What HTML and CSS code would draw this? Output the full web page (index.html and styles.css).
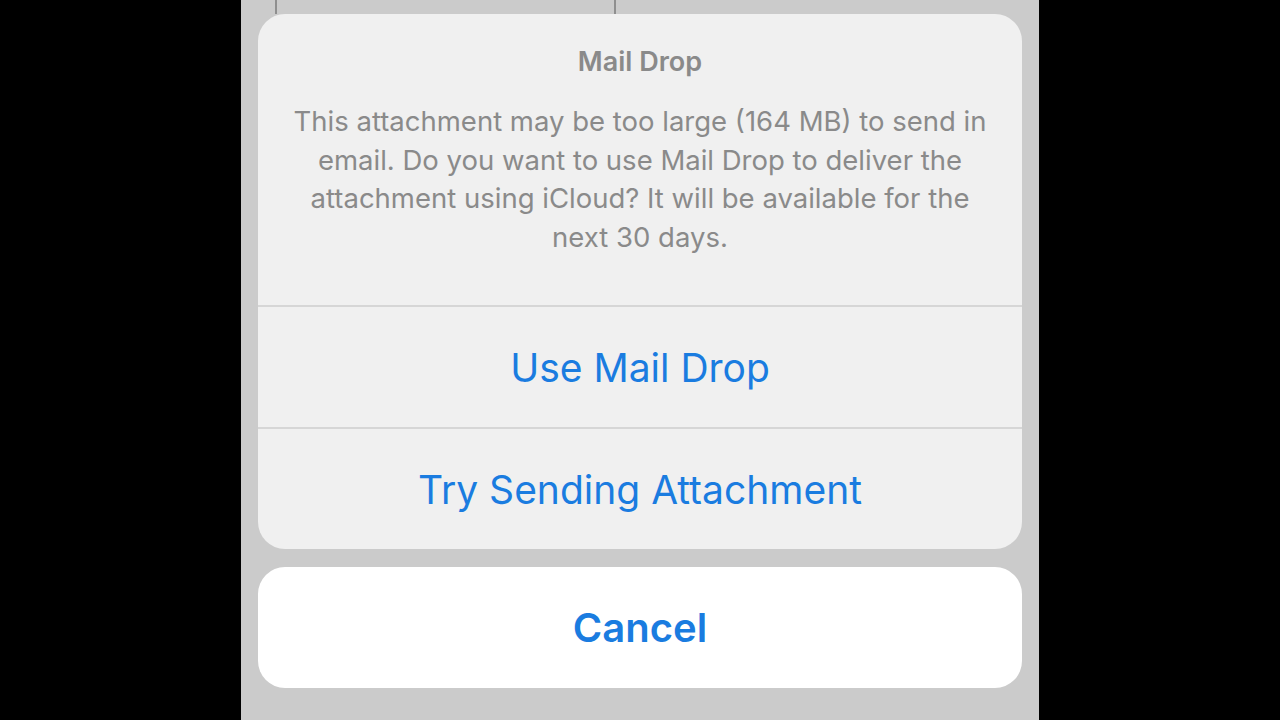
FILE: index.html
```html
<!DOCTYPE html>
<html>
<head>
<meta charset="utf-8">
<link rel="stylesheet" href="styles.css">
</head>
<body>
<div class="stage">
  <div class="phone">
    <div class="backdrop">
      <span class="bg-line bg-line-a"></span>
      <span class="bg-line bg-line-b"></span>
    </div>
    <div class="sheet">
      <div class="alert">
        <div class="header">
          <div class="title">Mail Drop</div>
          <div class="message">This attachment may be too large (164 MB) to send in email. Do you want to use Mail Drop to deliver the attachment using iCloud? It will be available for the next 30 days.</div>
        </div>
        <div class="action">Use Mail Drop</div>
        <div class="action">Try Sending Attachment</div>
      </div>
      <div class="cancel">Cancel</div>
    </div>
  </div>
</div>
</body>
</html>
```
FILE: styles.css
```css
html, body {
  margin: 0;
  padding: 0;
  background: #000;
  width: 1280px;
  height: 720px;
  overflow: hidden;
  font-family: Inter, "Noto Sans", sans-serif;
}
.stage {
  display: flex;
  justify-content: center;
  height: 720px;
}
.phone {
  width: 798px;
  background: #cbcbcb;
  height: 720px;
  position: relative;
}
.backdrop {
  position: absolute;
  left: 0;
  top: 0;
  right: 0;
  height: 14px;
}
.bg-line {
  position: absolute;
  top: 0;
  width: 2px;
  height: 14px;
  background: #8f8f8f;
}
.bg-line-a { left: 34px; }
.bg-line-b { left: 373px; }
.sheet {
  position: relative;
  padding: 14px 17px 0 17px;
  display: flex;
  flex-direction: column;
  gap: 18px;
}
.alert {
  background: #f0f0f0;
  border-radius: 27px;
  overflow: hidden;
}
.header {
  height: 293px;
  box-sizing: border-box;
  padding: 29px 34px 0 34px;
  text-align: center;
  border-bottom: 2px solid #d6d6d6;
}
.title {
  color: #8a8a8a;
  font-weight: 600;
  font-size: 27px;
  line-height: 38px;
}
.message {
  color: #8a8a8a;
  font-size: 27.5px;
  line-height: 38.5px;
  margin-top: 21px;
}
.action {
  height: 120px;
  display: flex;
  align-items: center;
  justify-content: center;
  color: #1a7ce0;
  font-size: 39px;
}
.action + .action {
  border-top: 2px solid #d6d6d6;
}
.cancel {
  background: #fff;
  border-radius: 27px;
  height: 121px;
  display: flex;
  align-items: center;
  justify-content: center;
  color: #1a7ce0;
  font-size: 40px;
  font-weight: 600;
}
```
